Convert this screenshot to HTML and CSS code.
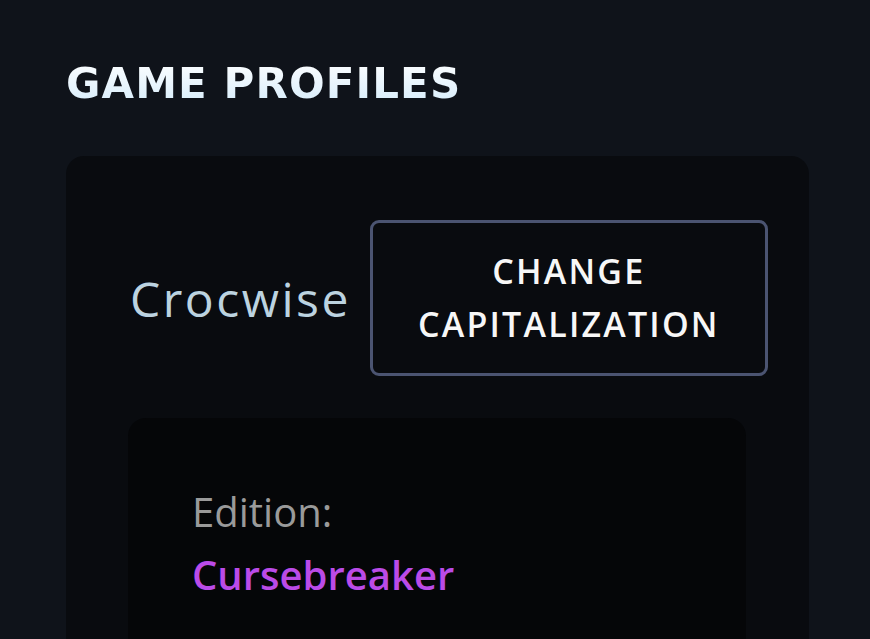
FILE: index.html
```html
<!DOCTYPE html>
<html lang="en">
<head>
  <meta charset="UTF-8">
  <meta name="viewport" content="width=device-width, initial-scale=1.0">
  <title>Game profiles</title>
  <link rel="stylesheet" href="styles.css">
</head>
<body>

  <h1 class="page-title">GAME PROFILES</h1>

  <div class="profile-card">
    <div class="profile-head">
      <span class="profile-name">Crocwise</span>
      <button class="caps-button">CHANGE CAPITALIZATION</button>
    </div>

    <div class="edition-box">
      <div class="edition-label">Edition:</div>
      <div class="edition-value">Cursebreaker</div>
    </div>
  </div>

</body>
</html>
```

FILE: styles.css
```css
html, body {
  height: 100%;
  overflow: hidden;
}
body {
  margin: 0;
  box-sizing: border-box;
  padding: 58px 0 0 66px;
  background-color: #0f131a;
  font-family: "Open Sans", "Noto Sans", sans-serif;
}
.page-title {
  margin: 0 0 46px;
  font-family: "DejaVu Sans", sans-serif;
  font-size: 42px;
  font-weight: 700;
  letter-spacing: 1.1px;
  line-height: 52px;
  background: linear-gradient(#ffffff, #d3ebfb);
  -webkit-background-clip: text;
  background-clip: text;
  color: transparent;
}
.profile-card {
  width: 743px;
  height: 483px;
  box-sizing: border-box;
  padding: 64px 0 0 62px;
  background-color: #090b0f;
  border-radius: 18px 18px 0 0;
}
.profile-head {
  display: flex;
  align-items: center;
  gap: 19px;
}
.profile-name {
  font-size: 48px;
  letter-spacing: 2.5px;
  color: #bcd3e0;
  padding-left: 2px;
}
.caps-button {
  width: 398px;
  height: 156px;
  padding: 0 30px;
  background-color: #090b0f;
  border: 3px solid #4b5471;
  border-radius: 9px;
  color: #f7f7f7;
  font-family: "Open Sans", "Noto Sans", sans-serif;
  font-size: 34px;
  font-weight: 600;
  letter-spacing: 2.2px;
  line-height: 53px;
  cursor: pointer;
}
.edition-box {
  margin-top: 42px;
  width: 618px;
  height: 221px;
  box-sizing: border-box;
  padding: 62px 64px 0;
  background-color: #050608;
  border-radius: 18px 18px 0 0;
}
.edition-label {
  font-size: 40px;
  color: #9a9a9a;
  line-height: 63px;
}
.edition-value {
  font-size: 40px;
  font-weight: 600;
  color: #bb4be8;
  line-height: 63px;
}
```
